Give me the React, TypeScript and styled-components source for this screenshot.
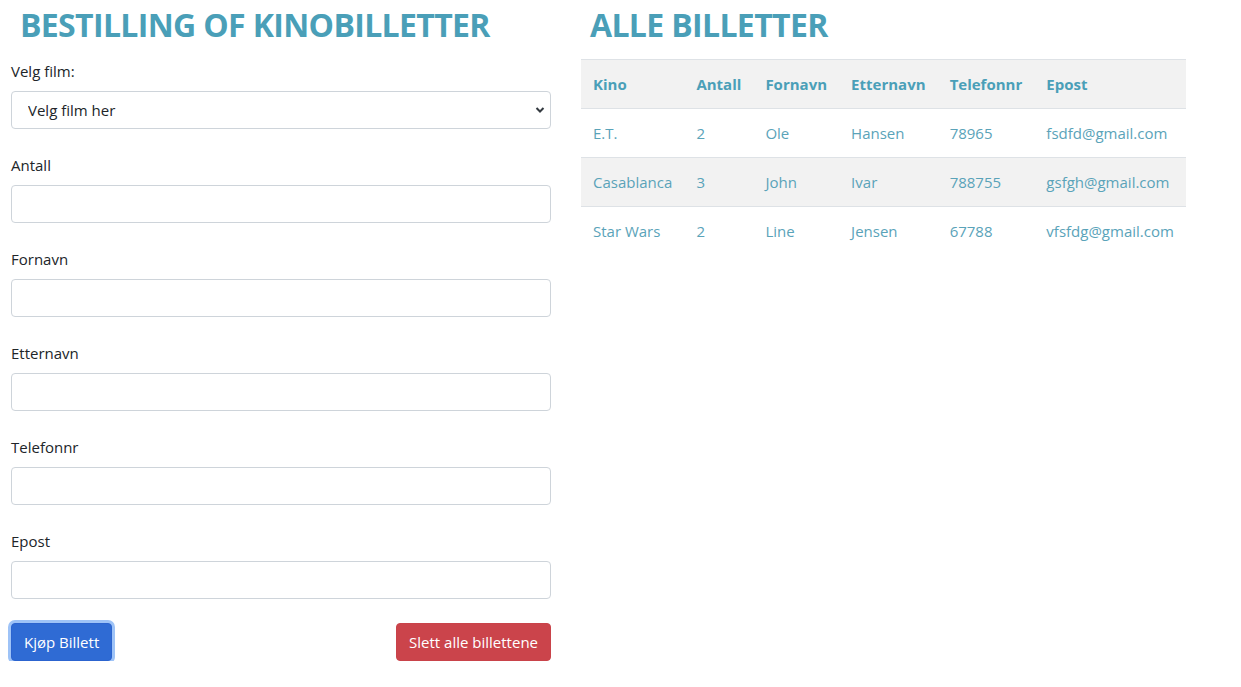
import React from 'react';
import styled, { createGlobalStyle } from 'styled-components';

const GlobalStyle = createGlobalStyle`
  * {
    box-sizing: border-box;
  }
  body {
    margin: 0;
    background: #ffffff;
    color: #212529;
    font-family: 'Open Sans', 'Liberation Sans', sans-serif;
    font-size: 16px;
    line-height: 1.5;
  }
`;

const teal = '#4a9fb8';

const Page = styled.div`
  display: flex;
  align-items: flex-start;
  gap: 30px;
  padding: 0 11px;
`;

const FormColumn = styled.div`
  width: 540px;
  flex-shrink: 0;
`;

const TableColumn = styled.div`
  width: 605px;
`;

const Title = styled.h1`
  margin: 5px 0 14px 9px;
  color: ${teal};
  font-size: 32px;
  font-weight: 700;
  line-height: 40px;
  letter-spacing: -0.65px;
`;

const Field = styled.div`
  margin-bottom: 24px;
`;

const Label = styled.label`
  display: block;
  margin-bottom: 8px;
  font-size: 15px;
  line-height: 24px;
  color: #212529;
`;

const Input = styled.input`
  display: block;
  width: 100%;
  height: 38px;
  padding: 6px 12px;
  border: 1px solid #ced4da;
  border-radius: 4px;
  font: inherit;
  background: #fff;
`;

const SelectWrap = styled.div`
  position: relative;
`;

const Select = styled.select`
  display: block;
  width: 100%;
  height: 38px;
  padding: 6px 30px 6px 16px;
  border: 1px solid #ced4da;
  border-radius: 4px;
  font: inherit;
  font-size: 15px;
  color: #212529;
  background: #fff;
  appearance: none;
`;

const Chevron = styled.svg`
  position: absolute;
  right: 6px;
  top: 15px;
  pointer-events: none;
`;

const Buttons = styled.div`
  display: flex;
  justify-content: space-between;
  align-items: center;
  margin-top: 1px;
`;

const Button = styled.button<{ $variant: 'primary' | 'danger' }>`
  height: 38px;
  padding: 0 12px;
  border: 1px solid ${(p) => (p.$variant === 'primary' ? '#2c64cf' : '#c9434a')};
  border-radius: 4px;
  background: ${(p) => (p.$variant === 'primary' ? '#2f6bd4' : '#cb444b')};
  color: #ffffff;
  font: inherit;
  font-size: 15px;
  cursor: pointer;
  box-shadow: ${(p) => (p.$variant === 'primary' ? '0 0 0 3px #9ec3f7' : 'none')};
`;

const Table = styled.table`
  width: 100%;
  border-collapse: collapse;
  font-size: 15px;
  color: ${teal};
`;

const HeadCell = styled.th`
  text-align: left;
  font-weight: 700;
  padding: 12px 12px;
  height: 49px;
  background: #f2f2f2;
  border-top: 1px solid #dee2e6;
  border-bottom: 1px solid #dee2e6;
  white-space: nowrap;
`;

const Row = styled.tr<{ $striped: boolean }>`
  background: ${(p) => (p.$striped ? '#f2f2f2' : '#ffffff')};

  &:last-child td {
    border-bottom: none;
  }
`;

const Cell = styled.td`
  padding: 12px 12px;
  height: 49px;
  border-bottom: 1px solid #dee2e6;
  white-space: nowrap;
  color: #5aa3b9;
`;

const fields = ['Antall', 'Fornavn', 'Etternavn', 'Telefonnr', 'Epost'];

const tickets = [
  { kino: 'E.T.', antall: 2, fornavn: 'Ole', etternavn: 'Hansen', tlf: '78965', epost: 'fsdfd@gmail.com' },
  { kino: 'Casablanca', antall: 3, fornavn: 'John', etternavn: 'Ivar', tlf: '788755', epost: 'gsfgh@gmail.com' },
  { kino: 'Star Wars', antall: 2, fornavn: 'Line', etternavn: 'Jensen', tlf: '67788', epost: 'vfsfdg@gmail.com' },
];

export default function App() {
  return (
    <>
      <GlobalStyle />
      <Page>
        <FormColumn>
          <Title>BESTILLING OF KINOBILLETTER</Title>
          <Field>
            <Label>Velg film:</Label>
            <SelectWrap>
              <Select defaultValue="">
                <option value="">Velg film her</option>
                <option>E.T.</option>
                <option>Casablanca</option>
                <option>Star Wars</option>
              </Select>
              <Chevron width="10" height="8" viewBox="0 0 10 8">
                <path d="M1.5 2 L5 5.5 L8.5 2" fill="none" stroke="#343a40" strokeWidth="2" />
              </Chevron>
            </SelectWrap>
          </Field>
          {fields.map((f) => (
            <Field key={f}>
              <Label>{f}</Label>
              <Input type="text" />
            </Field>
          ))}
          <Buttons>
            <Button $variant="primary">Kjøp Billett</Button>
            <Button $variant="danger">Slett alle billettene</Button>
          </Buttons>
        </FormColumn>
        <TableColumn>
          <Title>ALLE BILLETTER</Title>
          <Table>
            <thead>
              <tr>
                <HeadCell>Kino</HeadCell>
                <HeadCell>Antall</HeadCell>
                <HeadCell>Fornavn</HeadCell>
                <HeadCell>Etternavn</HeadCell>
                <HeadCell>Telefonnr</HeadCell>
                <HeadCell>Epost</HeadCell>
              </tr>
            </thead>
            <tbody>
              {tickets.map((t, i) => (
                <Row key={t.kino} $striped={i % 2 === 1}>
                  <Cell>{t.kino}</Cell>
                  <Cell>{t.antall}</Cell>
                  <Cell>{t.fornavn}</Cell>
                  <Cell>{t.etternavn}</Cell>
                  <Cell>{t.tlf}</Cell>
                  <Cell>{t.epost}</Cell>
                </Row>
              ))}
            </tbody>
          </Table>
        </TableColumn>
      </Page>
    </>
  );
}
